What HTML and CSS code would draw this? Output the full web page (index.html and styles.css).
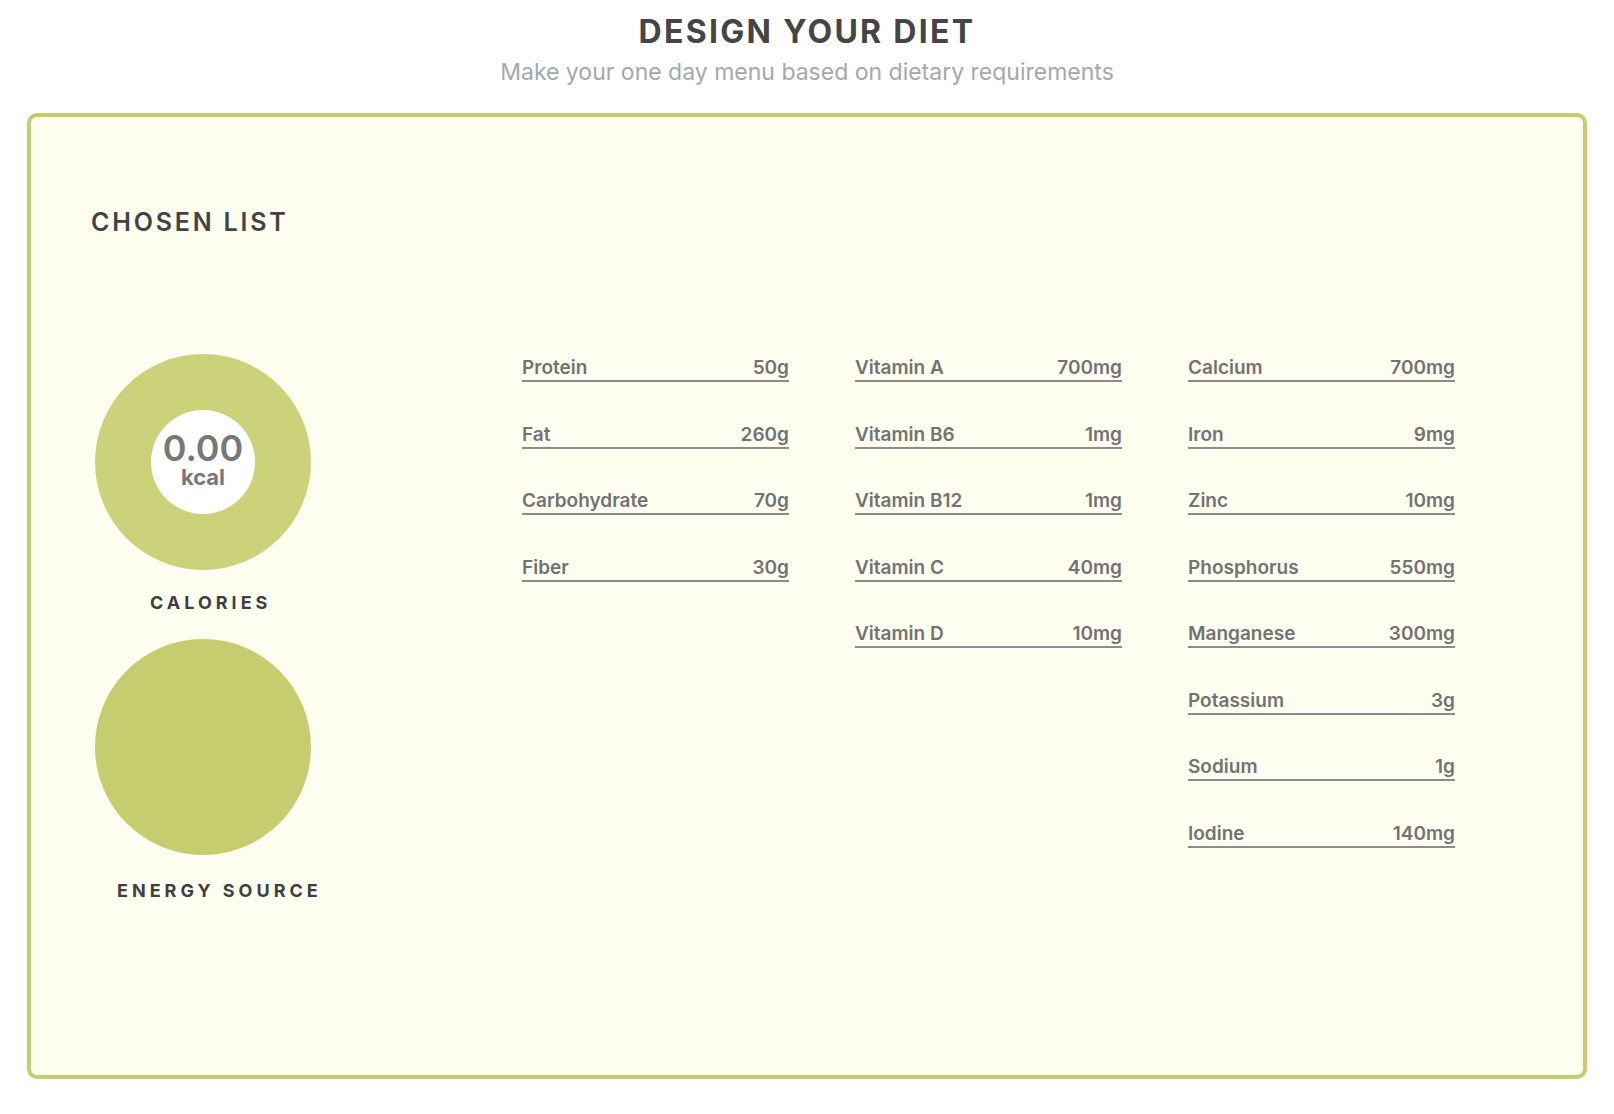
FILE: index.html
```html
<!DOCTYPE html>
<html lang="en">
<head>
<meta charset="utf-8">
<title>Design Your Diet</title>
<link rel="stylesheet" href="styles.css">
</head>
<body>
<header class="page-head">
  <h1 class="page-title">DESIGN YOUR DIET</h1>
  <p class="page-sub">Make your one day menu based on dietary requirements</p>
</header>
<main class="panel">
  <h2 class="panel-title">CHOSEN LIST</h2>
  <div class="panel-body">
    <div class="charts">
      <div class="donut">
        <div class="donut-hole">
          <span class="donut-value">0.00</span>
          <span class="donut-unit">kcal</span>
        </div>
      </div>
      <div class="chart-label label-cal">CALORIES</div>
      <div class="pie"></div>
      <div class="chart-label label-energy">ENERGY SOURCE</div>
    </div>
    <div class="nutrients">
      <ul class="col">
        <li class="row"><span>Protein</span><span>50g</span></li>
        <li class="row"><span>Fat</span><span>260g</span></li>
        <li class="row"><span>Carbohydrate</span><span>70g</span></li>
        <li class="row"><span>Fiber</span><span>30g</span></li>
      </ul>
      <ul class="col">
        <li class="row"><span>Vitamin A</span><span>700mg</span></li>
        <li class="row"><span>Vitamin B6</span><span>1mg</span></li>
        <li class="row"><span>Vitamin B12</span><span>1mg</span></li>
        <li class="row"><span>Vitamin C</span><span>40mg</span></li>
        <li class="row"><span>Vitamin D</span><span>10mg</span></li>
      </ul>
      <ul class="col">
        <li class="row"><span>Calcium</span><span>700mg</span></li>
        <li class="row"><span>Iron</span><span>9mg</span></li>
        <li class="row"><span>Zinc</span><span>10mg</span></li>
        <li class="row"><span>Phosphorus</span><span>550mg</span></li>
        <li class="row"><span>Manganese</span><span>300mg</span></li>
        <li class="row"><span>Potassium</span><span>3g</span></li>
        <li class="row"><span>Sodium</span><span>1g</span></li>
        <li class="row"><span>Iodine</span><span>140mg</span></li>
      </ul>
    </div>
  </div>
</main>
</body>
</html>
```
FILE: styles.css
```css
* { box-sizing: border-box; }
html, body { margin: 0; padding: 0; }
body {
  background: #ffffff;
  font-family: Inter, "Open Sans", "Liberation Sans", sans-serif;
  color: #444;
  width: 1614px;
  height: 1114px;
  overflow: hidden;
}
.page-head {
  text-align: center;
  padding-top: 13px;
}
.page-title {
  margin: 0;
  font-size: 32px;
  line-height: 38px;
  font-weight: 700;
  letter-spacing: 2.3px;
  color: #454545;
}
.page-sub {
  margin: 7px 0 0;
  font-size: 23px;
  line-height: 28px;
  font-weight: 400;
  color: #a3a8ad;
}
.panel {
  margin: 27px 27px 0 27px;
  height: 966px;
  border: 4px solid #c5cd6c;
  border-radius: 10px;
  background: #fefef0;
  padding: 90px 60px 0 60px;
}
.panel-title {
  margin: 0;
  font-size: 25px;
  line-height: 30px;
  font-weight: 600;
  letter-spacing: 2.8px;
  color: #434343;
}
.panel-body {
  display: flex;
  margin-top: 117px;
}
.charts {
  width: 431px;
  flex: none;
  display: flex;
  flex-direction: column;
  align-items: flex-start;
}
.donut {
  margin-left: 4px;
  width: 216px;
  height: 216px;
  border-radius: 50%;
  background: #cbd27a;
  display: flex;
  align-items: center;
  justify-content: center;
}
.donut-hole {
  width: 104px;
  height: 104px;
  border-radius: 50%;
  background: #ffffff;
  display: flex;
  flex-direction: column;
  align-items: center;
  justify-content: center;
  color: #787878;
}
.donut-value {
  font-size: 36px;
  line-height: 44px;
  font-weight: 600;
  margin-top: -7px;
}
.donut-unit {
  font-size: 22px;
  line-height: 27px;
  font-weight: 700;
  margin-top: -6px;
}
.pie {
  margin-left: 4px;
  margin-top: 25px;
  width: 216px;
  height: 216px;
  border-radius: 50%;
  background: #c5cd6e;
}
.chart-label {
  font-size: 18px;
  line-height: 22px;
  font-weight: 700;
  letter-spacing: 4px;
  color: #3f3f3f;
}
.label-cal { margin-top: 22px; margin-left: 59px; }
.label-energy { margin-top: 25px; margin-left: 26px; }
.nutrients {
  display: flex;
  gap: 66px;
}
.col {
  list-style: none;
  margin: 0;
  padding: 3px 0 0;
  width: 267px;
  display: flex;
  flex-direction: column;
  gap: 41.5px;
}
.row {
  display: flex;
  justify-content: space-between;
  font-size: 19px;
  line-height: 22px;
  font-weight: 600;
  color: #737373;
  padding-bottom: 1px;
  border-bottom: 2px solid #8c8c8c;
}
```
